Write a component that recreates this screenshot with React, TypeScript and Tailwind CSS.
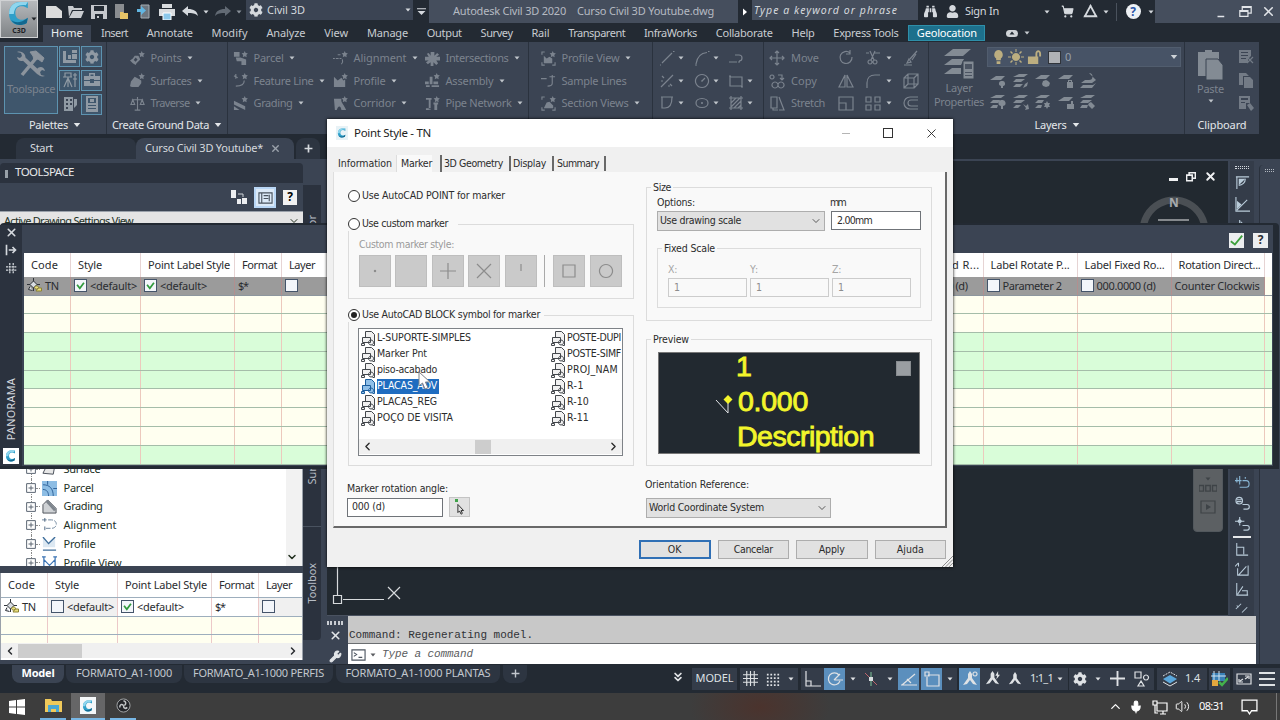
import React, { useLayoutEffect, useRef, useState } from 'react';
import { ChevronDown, ChevronLeft, ChevronRight, ChevronUp, ChevronsDown, Mic, ShoppingCart, Volume2, Wrench, X } from 'lucide-react';
import { FaCog, FaUser, FaBinoculars } from 'react-icons/fa';
import clsx from 'clsx';

interface FitProps {
  w: number;
  children: string;
  className?: string;
}

// Label that spreads or tightens its letters to fill a slot of w pixels
const Fit: React.FC<FitProps> = ({ w, children, className }) => {
  const ref = useRef<HTMLSpanElement>(null);
  const [spacing, setSpacing] = useState(0);

  useLayoutEffect(() => {
    if (ref.current) {
      const natural = ref.current.getBoundingClientRect().width;
      setSpacing((w - natural) / children.length);
    }
  }, [w, children]);

  return (
    <span className={clsx('block shrink-0 whitespace-pre', className)} style={{ width: w }}>
      <span ref={ref} className="inline-block" style={{ letterSpacing: spacing }}>{children}</span>
    </span>
  );
};

interface IconProps {
  d?: string;
  f?: string;
  size?: number;
  className?: string;
}

// d is stroked, f is filled, both on a 16 unit grid
const Icon: React.FC<IconProps> = ({ d, f, size = 16, className }) => (
  <svg width={size} height={size} viewBox="0 0 16 16" fill="none" className={clsx('shrink-0', className)}>
    {f && <path d={f} fill="currentColor" fillRule="evenodd" />}
    {d && <path d={d} stroke="currentColor" strokeWidth="1.2" />}
  </svg>
);

const Caret: React.FC<{ className?: string }> = ({ className }) => (
  <svg width="6" height="4" viewBox="0 0 6 4" className={clsx('shrink-0', className)}>
    <path d="M0.5 0.5h5L3 3.5z" fill="currentColor" />
  </svg>
);

const Cell: React.FC<{ className: string; children?: React.ReactNode }> = ({ className, children }) => (
  <div className={clsx('flex shrink-0 items-center justify-center', className)}>{children}</div>
);

const CLogo: React.FC<{ size: number }> = ({ size }) => (
  <svg width={size} height={size} viewBox="0 0 24 24" className="shrink-0">
    <path d="M20 1v6c-2-1.400-4-2-6-2-4 0-6 2.500-6 6.500 0 4 2.500 6.500 6 6.500 2 0 4-.6 6-2l-1 5c-2 1.300-4.500 2-7 2C6 23 2 19 2 12.500 2 5 6.500 1 13 1z" fill="#2f9fc9" />
    <path d="M2 12.500C2 5 6.500 1 13 1h7l-2 3c-7-1-11 2-11.500 8.500z" fill="#8fd6ee" />
    <path d="M4 18c3 3 9 4 16-2l-1 5c-2 1.300-4.500 2-7 2-3.500 0-6.400-1.800-8-5z" fill="#12688f" />
  </svg>
);

const SPARK = 'M12.500 0l1 2 2.300.5-1.600 1.700.4 2.400-2.100-1.100-2.100 1.100.4-2.400L9.200 2.500l2.300-.5z';

const icons = {
  point: { f: SPARK + 'M9 5l2 4-4 4-1 2-3-2-3-3 3-2 2-3zM6 7l-2 2.500L6 11.500 8 9z' },
  surface: { f: SPARK + 'M1 9l4-5 4 2 3 2v3l-3 4H2L0 14z' },
  traverse: { d: 'M8 1v14M5 15h6M2 4h12M3 4L1 9h4zM13 4l-2 5h4z' },
  parcel: { f: SPARK + 'M1 1h6v5H1zM3 7h5l6 2v6H9v-4H4z' },
  feature: { f: SPARK, d: 'M1 3l4 2M3 1v5M12 8c0 4-3 6-9 6' },
  grading: { f: SPARK + 'M1 5l12 6v4L1 9zM1 11l6 4H1z' },
  alignment: { f: SPARK, d: 'M0 8h2M3 8h3M7 8h2M8 4h-3M10 9c1 3 0 4-1 5' },
  profile: { f: SPARK + 'M1 4l4 4 4-3 2 3 2-1v8H1z' },
  corridor: { f: SPARK + 'M1 3h8c-1 4 2 5 5 12H9C8 9 5 11 4 15H2z' },
  intersection: { f: 'M6 1h4v4l3-3 2 2-3 2h4v4h-4l2 3-2 2-3-3v4H6v-4l-3 2-2-2 3-2H0V6h4L2 3l2-1 2 3z' },
  assembly: { f: SPARK + 'M5 4h3v8H5zM0 9h4v3H0zM9 9h5v3H9zM1 13h4v2H1zM7 13h8v2H7z' },
  pipe: { f: SPARK + 'M1 2h6v2H6v10H4V4H1zM9 7h5v2h-1v6h-3V9H9zM1 13h5v2H1z' },
  profileView: { d: 'M1 4V1h3M1 12v3h3M12 15h3v-3', f: SPARK + 'M3 5l3 3 3-2 3 2v5H3z' },
  sample: { d: 'M0 6h6M9 4h6M12 2v9c0 3-3 3-5 3' },
  sectionView: { d: 'M1 4V1h3M1 12v3h3M12 15h3v-3', f: SPARK + 'M3 13l3-6 3-1 4 4v3z' },
};

type IconName = keyof typeof icons;

const ribbonColumns: { pad: string; items: [IconName, string, number, boolean][] }[] = [
  { pad: 'w-[121px] pl-[23px] border-r', items: [['point', 'Points', 31, true], ['surface', 'Surfaces', 41, true], ['traverse', 'Traverse', 39, true]] },
  { pad: 'w-[100px] pl-[5px]', items: [['parcel', 'Parcel', 30, true], ['feature', 'Feature Line', 60, true], ['grading', 'Grading', 39, true]] },
  { pad: 'w-[92px] pl-[5px]', items: [['alignment', 'Alignment', 53, true], ['profile', 'Profile', 32, true], ['corridor', 'Corridor', 42, true]] },
  { pad: 'w-[109px] pl-[5px] border-r', items: [['intersection', 'Intersections', 63, true], ['assembly', 'Assembly', 48, true], ['pipe', 'Pipe Network', 66, true]] },
  { pad: 'w-[124px] pl-[12px] border-r', items: [['profileView', 'Profile View', 58, true], ['sample', 'Sample Lines', 65, false], ['sectionView', 'Section Views', 67, true]] },
];

const drawTools: [string, boolean][][] = [
  [['M3 13L13 3M1 15h1M14 1.500h1.500', true], ['M2 14C3 7 7 3 13 2.500M1 15h2M14 1.500h1.500', true], ['M1 12h8M7 5h4c4 0 4 6 0 6M10 12h2', false]],
  [['M2 14L14 2M3 3l2 2M11 11l2 2M2 8h2M9 13h2', true], ['M8 1.500a6.500 6.500 0 1 0 .01 0M8 8l3-3M7 8h2', true], ['M2 4h12v9H2zM1 3h2M13 14h2', true]],
  [['M3 2v11h3c5 0 7-4 7-11M2 2h12', true], ['M8 3.500c-8 0-8 9 0 9s8-9 0-9M7 8h2M8 7v2', true], ['M3 1v14M13 1v14M1 3h14M1 13h14M3 8l5-5M3 12l9-9M6 13l7-7M10 13l3-3', true]],
];

const modifyTools: { icon: string; label: string; w: number; a: string; b: string; c: string }[] = [
  {
    icon: 'M8 1v14M1 8h14M6 3l2-2 2 2M6 13l2 2 2-2M3 6L1 8l2 2M13 6l2 2-2 2',
    label: 'Move',
    w: 28,
    a: 'M12 3a6 6 0 1 0 2 4M12 0v4H8',
    b: 'M1 3h3M9 3h6M5 1l4 9M10 1L6 10M5 10a2 2 0 1 0 .01 0M10 10a2 2 0 1 0 .01 0',
    c: 'M14 1L7 9M13 4L9 10M6 9l2 3-4 1zM1 15h8',
  },
  {
    icon: 'M3 2a2 2 0 1 0 .01 0M9 2h4v4M11 5l2 2 2-2M6 9a3 3 0 1 0 .01 0M12 9a3 3 0 1 0 .01 0',
    label: 'Copy',
    w: 26,
    a: 'M7 2v12H1zM9 2v12h6z',
    b: 'M2 15V10C2 5 5 2 10 2h5',
    c: 'M1 5h10v10H1zM1 5l4-4h10v10l-4 4M11 5l4-4M5 1v10h10M5 11l-4 4',
  },
  {
    icon: 'M2 2h6v11H2zM10 2l5 13h-5M4 13v2h5',
    label: 'Stretch',
    w: 34,
    a: 'M1 2h14v13H1zM1 8h7v7',
    b: 'M1 2h5v5H1zM10 2h5v5h-5zM1 10h5v5H1zM10 10h5v5h-5z',
    c: 'M15 2H7a5 5 0 0 0 0 12h8M15 5H8a3 3 0 0 0 0 6h7',
  },
];

const menuTabs: [string, number][] = [
  ['Insert', 27], ['Annotate', 46], ['Modify', 36], ['Analyze', 39], ['View', 24], ['Manage', 41], ['Output', 35], ['Survey', 32],
  ['Rail', 18], ['Transparent', 57], ['InfraWorks', 53], ['Collaborate', 57], ['Help', 23], ['Express Tools', 65],
];

const TitleBar: React.FC = () => (
  <div className="flex h-[23px] items-center text-[#d5d9de]">
    <Cell className="ml-[5px] w-[22px]"><Icon f="M0 2h10l6 5v7H0z" className="text-[#dcdcdc]" /></Cell>
    <Cell className="w-[22px]"><Icon f="M0 2h5l1 2h8v2H4L1 13zM5 7h11l-3 7H1z" className="text-[#c9ccd0]" /></Cell>
    <Cell className="w-[23px]"><Icon f="M0 1h16v14H0zM3 2v5h10V2zM4 10v5h8v-5zM6 12h2v2H6z" className="text-[#c4c7cc]" /></Cell>
    <Cell className="w-[22px]">
      <svg width="16" height="16" viewBox="0 0 16 16"><path d="M2 0h9v14H2z" fill="#8a8d90" /><path d="M7 8h3l1 1h4v6H7z" fill="#e7c467" /></svg>
    </Cell>
    <Cell className="w-[24px]">
      <svg width="16" height="16" viewBox="0 0 16 16"><path d="M5 1h8v13H5z" fill="#6d767f" stroke="#a6adb4" /><path d="M1 5h4V2l5 4.500L5 11V8H1z" fill="#62b6e2" /></svg>
    </Cell>
    <Cell className="w-[21px]">
      <svg width="16" height="16" viewBox="0 0 16 16"><path d="M3 0h10v4H3zM0 5h16v7H0z" fill="#d9dcdf" /><path d="M4 9h8v7H4z" fill="#8cc8ea" stroke="#fff" /></svg>
    </Cell>
    <Cell className="w-[26px]"><Icon f="M0 7l6-5v3c6 0 9 2 10 7-3-3-6-3-10-3v3z" /></Cell>
    <Cell className="w-[6px]"><Caret /></Cell>
    <Cell className="w-[27px] text-[#626a74]"><Icon f="M16 7l-6-5v3c-6 0-9 2-10 7 3-3 6-3 10-3v3z" /></Cell>
    <Cell className="w-[6px] text-[#8a919a]"><Caret /></Cell>
    <div className="ml-1 flex h-[20px] w-[167px] items-center self-start bg-[#3b4453] pl-[3px]">
      <FaCog size={14} />
      <Fit w={38} className="ml-[4px] text-[11px]">Civil 3D</Fit>
      <Caret className="mr-[2px] ml-auto" />
    </div>
    <Cell className="w-[16px]"><Icon size={9} f="M0 2h16v2H0zM1 7h14l-7 7z" /></Cell>
    <div className="flex h-[23px] w-[309px] items-center bg-[#454e5d] pl-[24px] text-[11px] text-[#b5bac2]">
      <Fit w={113}>Autodesk Civil 3D 2020</Fit>
      <Fit w={137} className="ml-[11px]">Curso Civil 3D Youtube.dwg</Fit>
    </div>
    <Cell className="w-[14px]"><Icon size={8} f="M4 1l8 7-8 7z" className="text-white" /></Cell>
    <div className="flex h-[20px] w-[166px] items-center self-start bg-[#454e5d] pt-px pl-[2px] text-[10.500px] italic">
      <Fit w={144}>Type a keyword or phrase</Fit>
    </div>
    <Cell className="w-[24px]"><FaBinoculars size={13} /></Cell>
    <Cell className="w-[20px]"><FaUser size={13} /></Cell>
    <Fit w={34} className="ml-[3px] text-[11px]">Sign In</Fit>
    <Cell className="ml-[44px] w-[8px]"><Caret /></Cell>
    <Cell className="ml-[5px] w-[22px]"><ShoppingCart size={13} fill="currentColor" /></Cell>
    <Cell className="w-[24px]"><Icon d="M8 2L2 13h12zM8 1v3M1 13h3M12 13h3" size={15} className="[&_path]:[stroke-width:2]" /></Cell>
    <Cell className="w-[8px]"><Caret /></Cell>
    <div className="ml-[6px] h-[18px] w-px bg-[#4a525d]" />
    <Cell className="ml-[8px] w-[16px]"><div className="h-[15px] w-[15px] rounded-full bg-[#eef1f5] text-center text-[12px] leading-[15px] font-bold text-[#2a55a8]">?</div></Cell>
    <Cell className="ml-[6px] w-[8px]"><Caret /></Cell>
    <div className="flex h-[23px] flex-1 items-center justify-end bg-[#454e5d] pr-[1px] text-[#e2e5e9]">
      <Cell className="w-[24px]"><Icon size={12} d="M2 14h9" className="[&_path]:[stroke-width:2]" /></Cell>
      <Cell className="w-[23px]"><Icon size={13} d="M1 7h10v7H1zM4 7V2h11v8h-4M1 8h10M4 3h11" className="[&_path]:[stroke-width:1.500]" /></Cell>
      <Cell className="w-[22px]"><X size={15} strokeWidth={2.500} /></Cell>
    </div>
  </div>
);

const MenuRow: React.FC = () => (
  <div className="flex h-[19px] items-center pt-px text-[11px] text-[#c8ccd1]">
    <div className="ml-[5px] flex h-[17px] w-[48px] items-center justify-center self-end bg-[#3b4453] text-[#eceef0]">
      <Fit w={32}>Home</Fit>
    </div>
    <div className="ml-[10px] flex gap-[18.8px]">
      {menuTabs.map(([label, w]) => <Fit key={label} w={w}>{label}</Fit>)}
    </div>
    <div className="ml-[10px] flex h-[16px] w-[77px] items-center justify-center border border-[#2e8fa9] bg-[#1d708c] text-white">
      <Fit w={60}>Geolocation</Fit>
    </div>
    <div className="ml-[21px] flex h-[7px] w-[12px] items-center justify-center rounded-sm bg-[#d0d4d8] text-[#222a33]"><Caret className="rotate-180" /></div>
    <Caret className="ml-[6px]" />
  </div>
);

const SmallTool: React.FC<{ on?: boolean; children: React.ReactNode }> = ({ on, children }) => (
  <div className={clsx('flex h-[21px] w-[21px] items-center justify-center border', on ? 'border-[#5d93b0] bg-[#3f566c]' : 'border-transparent')}>{children}</div>
);

const layerIcons = [
  ['M6 3h9l-4 4H0zM12 8a2.500 2.500 0 0 1 1 5v2h-2v-2a2.500 2.500 0 0 1 1-5', 'M6 1h9l-4 3H0zM3 6h9l-4 3H0zM3 11h7l-3 3H0zM15 9l-1 4-4 2 2-4z', 'M6 2h9l-4 4H0zM11 7l2 1 2 2-1 3-3 1-3-1-1-2 1-3z', 'M6 2h9l-4 4H0zM10 9V7h4v2h1v6H9V9zM11 9h2V8h-2z', 'M9 0a3 3 0 1 1 0 7H5l-4 3h11l4-3zM3 12h10l3-2-4 5H0z'],
  ['M6 1h9l-4 3H0zM3 6h7l-2 3H0zM3 11h5l-1 3H0zM12 6a3 3 0 0 1 1 6v3h-2v-3a3 3 0 0 1 1-6', 'M6 1h9l-4 3H0zM3 6h9l-4 3H0zM3 11h5l-3 3H0zM16 15l-1-5-2 2-3-2 3 4-1 2z', 'M6 1h9l-4 3H0zM3 6h6l-2 3H0zM3 11h4l-1 3H0zM12 7l1 2h2l-1 2 1 2h-2l-1 2-1-2H9l1-2-1-2h2z', 'M6 3h9l-4 4H0zM9 10h4V7h2v3h1v5H9z', 'M6 1h9l-4 3H0zM3 6h9l-4 3H0zM2 11h6l-1 3H0zM9 9l2-1 4 4-3 3-4-4z'],
];

const Ribbon: React.FC = () => (
  <div className="flex h-[92px] w-[1259px] bg-[#3b4453] text-[11px] text-[#7b838e] [&>div]:border-[#2a323e]">
    <div className="flex w-[107px] flex-col border-r">
      <div className="flex h-[74px] pt-[4px] pl-[4px]">
        <div className="flex h-[68px] w-[54px] flex-col items-center border border-[#5d93b0] bg-[#3f566c] pt-[2px]">
          <svg width="30" height="30" viewBox="0 0 30 30" fill="none" stroke="#8c949d">
            <path d="M7 9l16 15" strokeWidth="4" />
            <path d="M1 3l4 1 1 3-2 2-3-1c1 5 6 5 8 2 2-4-3-9-8-7z" fill="#8c949d" strokeWidth="0" />
            <path d="M29 27l-4-1-1-3 2-2 3 1c-1-5-6-5-8-2-2 4 3 9 8 7z" fill="#8c949d" strokeWidth="0" />
            <path d="M21 8L6 26" strokeWidth="3.500" />
            <path d="M14 3l6-1 8 7-2 4-4-3-4 1-1-4z" fill="#8c949d" strokeWidth="1" />
          </svg>
          <Fit w={48} className="mt-[3px] leading-[14px]">Toolspace</Fit>
        </div>
        <div className="ml-px grid grid-cols-[22px_22px] gap-y-[1.500px] text-[#909aa4]">
          <SmallTool on><Icon f="M1 2h3v9h10v3H1zM6 6h3v4H6zM10 1h5v9h-5zM10 4v1h5V4z" /></SmallTool>
          <SmallTool on><FaCog size={14} /></SmallTool>
          <SmallTool on><Icon d="M3 1h6v4H3zM1 5h9M6 5v10M6 6L2 15M6 6l4 9M13 1v14M11 3h4M11 7h4" /></SmallTool>
          <SmallTool on><Icon f="M5 1h6v3h5v4h-6V7H6v1H0V4h5zM6.500 2.500V4h3V2.500zM0 9h6v2h4V9h6v5H0z" /></SmallTool>
          <SmallTool><Icon f="M2 1h9v14H2zM4 3v2h2V3zM8 3v2h2V3zM4 7v2h2V7zM8 7v2h2V7zM4 11v2h2v-2zM12 3h3v6l-3 3z" /></SmallTool>
          <SmallTool on><Icon f="M2 0h12v16H2zM4 2v5h8V2zM4 9v1h8V9zM4 12v1h8v-1zM6 3h4v3H6z" /></SmallTool>
        </div>
      </div>
      <div className="flex items-center justify-center pt-px pl-[3px] text-[11px] text-[#e4e7ea]"><Fit w={39}>Palettes</Fit><Caret className="ml-[6px] scale-130" /></div>
    </div>
    {ribbonColumns.map((col, i) => (
      <div key={i} className={clsx('flex shrink-0 flex-col pt-[5px]', col.pad)}>
        {col.items.map(([icon, label, w, caret]) => (
          <div key={label} className="flex h-[22.500px] items-center">
            <Icon {...icons[icon]} size={15} />
            <Fit w={w} className="ml-[5.500px]">{label}</Fit>
            {caret && <Caret className="ml-[5px] text-[#c0c5cb]" />}
          </div>
        ))}
        {i === 0 && <div className="mt-[2px] -ml-[18px] flex items-center text-[#e4e7ea]"><Fit w={97}>Create Ground Data</Fit><Caret className="ml-[6px] scale-130" /></div>}
      </div>
    ))}
    <div className="w-[111px] border-r pt-[5px] pl-[6px]">
      {drawTools.map((row, i) => (
        <div key={i} className="flex h-[22.500px] items-center">
          {row.map(([d, caret], j) => (
            <div key={j} className="flex w-[36px] items-center">
              <Icon d={d} size={16} />
              {caret && <Caret className="ml-[3px] text-[#c0c5cb]" />}
            </div>
          ))}
        </div>
      ))}
    </div>
    <div className="w-[165px] border-r pt-[5px] pl-[5px]">
      {modifyTools.map((row) => (
        <div key={row.label} className="flex h-[22.500px] items-center">
          <Icon d={row.icon} />
          <Fit w={row.w} className="ml-[6px]">{row.label}</Fit>
          <div className="ml-auto flex w-[93px] items-center">
            <Icon d={row.a} className="ml-[3px]" />
            <Icon d={row.b} className="ml-[11px]" />
            <Caret className="ml-[5px] text-[#c0c5cb]" />
            <Icon d={row.c} className="ml-[11px]" />
          </div>
        </div>
      ))}
    </div>
    <div className="flex w-[256px] flex-col border-r">
      <div className="flex h-[74px]">
        <div className="flex w-[58px] flex-col items-center pt-[6px] pl-[2px]">
          <svg width="32" height="33" viewBox="0 0 32 33" fill="#838b94">
            <path d="M10 1h18l-8 7H1zM9 11h12l-3 6H1zM9 20h9v6H1z" />
            <path d="M20 13h11v18H20z" stroke="#3b4453" />
            <path d="M22 16h7v5h-7zM22 24h7v1h-7zM22 27h7v1h-7z" fill="#4b5462" />
          </svg>
          <Fit w={27} className="leading-[14px]">Layer</Fit>
          <Fit w={50} className="leading-[14px]">Properties</Fit>
        </div>
        <div className="pt-[5px]">
          <div className="flex h-[20px] w-[194px] items-center border border-[#515d6e] bg-[#475366] pr-[3px] pl-[3px]">
            <Icon f="M8 0a5 5 0 0 1 2.500 9v2h-5V9A5 5 0 0 1 8 0zM6 12h4v3H6z" size={15} className="text-[#bcae80]" />
            <Icon f="M8 4a4 4 0 1 1-.01 0M7.500 0h1v3h-1zM7.500 13h1v3h-1zM0 7.500h3v1H0zM13 7.500h3v1h-3zM2 3l1-1 2 2-1 1zM13 2l1 1-2 2-1-1zM2 13l2-2 1 1-2 2zM11 12l1-1 2 2-1 1z" className="ml-[2px] text-[#bcae80]" />
            <Icon f="M1 7h8V4c0-5 6-5 6 0v3h-2V4c0-2-2-2-2 0v3h1v8H1z" size={15} className="ml-[3px] text-[#bcae80]" />
            <div className="ml-[6px] h-[13px] w-[13px] border border-[#30343a] bg-[#b0b2b6]" />
            <span className="ml-[4px] text-[#98a0aa]">0</span>
            <Caret className="ml-auto scale-130 text-[#cdd2d7]" />
          </div>
          {layerIcons.map((row, i) => (
            <div key={i} className="flex h-[21.500px] items-end gap-[6.500px] pl-[3px] text-[#838b94]">
              {row.map((f) => <Icon key={f} f={f} />)}
            </div>
          ))}
        </div>
      </div>
      <div className="flex items-center justify-center pt-px text-[#e4e7ea]"><Fit w={32}>Layers</Fit><Caret className="ml-[6px] scale-130" /></div>
    </div>
    <div className="flex flex-1 flex-col">
      <div className="flex h-[74px] pt-[7px] pl-[10px]">
        <div className="flex w-[31px] flex-col items-center">
          <svg width="27" height="33" viewBox="0 0 27 33" fill="#838b94"><path d="M1 3h7V1h7v2h7v24H1z" /><path d="M9 10h12l5 6v15H9z" stroke="#3b4453" /></svg>
          <Fit w={27} className="leading-[14px]">Paste</Fit>
          <Caret className="mt-[3px] text-[#c0c5cb]" />
        </div>
        <div className="ml-[12px] flex flex-col gap-[7px] text-[#737b86]">
          <Icon f="M1 1h12v6l-3 3v4H1zM3 3v1h7V3zM3 6v1h7V6zM3 9v1h5V9z" d="M9 8l6 6M15 8l-6 6" />
          <Icon f="M1 1h7l3 3H5v9H1zM6 5h6l3 3v8H6z" />
          <Icon f="M1 1h11v7H8v6H1zM3 3v2h7V3zM3 7v1h4V7zM9 10l3-2 4 5-3 3z" />
        </div>
      </div>
      <div className="flex justify-center pt-px text-[#e4e7ea]"><Fit w={49}>Clipboard</Fit></div>
    </div>
  </div>
);

const FileTabs: React.FC = () => (
  <div className="flex h-[27px] shrink-0 items-end border-b-2 border-[#3b4453] pl-[16px] text-[11px] text-[#d5d9de]">
    <div className="flex h-[21px] w-[120px] items-center rounded-t-lg bg-[#2d3541] pl-[14px]"><Fit w={23}>Start</Fit></div>
    <div className="flex h-[21px] w-[158px] items-center rounded-t-lg bg-[#3b4453] pl-[9px]">
      <Fit w={118}>Curso Civil 3D Youtube*</Fit>
      <X size={11} strokeWidth={3} className="ml-[7px] text-[#9ba2ab]" />
    </div>
    <Cell className="ml-[2px] h-[21px] w-[24px] rounded-t-lg bg-[#2d3541]"><Icon size={9} d="M8 1v14M1 8h14" className="[&_path]:[stroke-width:3]" /></Cell>
  </div>
);

const Check: React.FC<{ on?: boolean }> = ({ on }) => (
  <div className="flex h-[13px] w-[13px] shrink-0 items-center justify-center border border-[#44546a] bg-[#f3f6fa]">
    {on && <Icon size={11} d="M3 7l4 5 6-8" className="text-[#2f9a3b] [&_path]:[stroke-width:2.500]" />}
  </div>
);

interface Column {
  w: string;
  head?: string;
  headW?: number;
  cell?: React.ReactNode;
}

const pointIcon = (
  <svg width="15" height="15" viewBox="0 0 15 15" fill="none" className="shrink-0" stroke="#30343a">
    <path d="M6.500 0v13M0 6.500h13" />
    <path d="M6.500 3L10 6.500 6.500 10 3 6.500zM3 8.500l-1.500 3 4 1" fill="#d9dde2" />
    <path d="M8 10.500a2 1.600 0 1 1 .01.01M11 10h3.500v3H9z" fill="#e9df7d" stroke="#8d8335" />
  </svg>
);

const baseColumns: Column[] = [
  { w: 'w-[47px]', head: 'Code', headW: 27, cell: <>{pointIcon}<Fit w={14} className="ml-[3px]">TN</Fit></> },
  { w: 'w-[70px]', head: 'Style', headW: 24, cell: <><Check on /><Fit w={47} className="ml-[3px]">{'<default>'}</Fit></> },
  { w: 'w-[94px]', head: 'Point Label Style', headW: 82, cell: <><Check on /><Fit w={47} className="ml-[3px]">{'<default>'}</Fit></> },
  { w: 'w-[47px]', head: 'Format', headW: 35, cell: <Fit w={10}>$*</Fit> },
  { w: 'w-[47px]', head: 'Layer', headW: 26, cell: <Check /> },
];

const panoramaColumns: Column[] = [
  ...baseColumns,
  ...Array.from({ length: 6 }, () => ({ w: 'w-[93.600px]' })),
  { w: 'w-[93px]', head: 'Label Fixed R...', headW: 82, cell: <><Check /><Fit w={58} className="ml-[3px]">000.0000 (d)</Fit></> },
  { w: 'w-[94px]', head: 'Label Rotate P...', headW: 79, cell: <><Check /><Fit w={59} className="ml-[3px]">Parameter 2</Fit></> },
  { w: 'w-[94px]', head: 'Label Fixed Ro...', headW: 80, cell: <><Check /><Fit w={59} className="ml-[3px]">000.0000 (d)</Fit></> },
  { w: 'w-[93px]', head: 'Rotation Direct...', headW: 82, cell: <Fit w={85}>Counter Clockwis</Fit> },
];

const stripes = ['bg-[#fffff0]', 'bg-[#fffff0]', 'bg-[#d9fdd9]', 'bg-[#d9fdd9]', 'bg-[#d9fdd9]', 'bg-[#fffff0]', 'bg-[#fffff0]', 'bg-[#fffff0]', 'bg-[#d9fdd9]'];

const TableHead: React.FC<{ columns: Column[] }> = ({ columns }) => (
  <div className="flex h-[24px] shrink-0 bg-white">
    {columns.map((c, i) => (
      <div key={i} className={clsx('flex shrink-0 items-center border-r border-[#e6d4d4] pl-[7px]', c.w)}>
        {c.head && <Fit w={c.headW ?? 0}>{c.head}</Fit>}
      </div>
    ))}
  </div>
);

const Panorama: React.FC = () => (
  <section className="absolute top-[223px] left-0 z-10 flex h-[246px] w-[1279px] rounded-t border-t-2 border-r-[6px] border-b-[3px] border-[#232a33] bg-[#3b4453] text-[11px] text-[#2a2c30]">
    <div className="flex w-[22px] shrink-0 flex-col items-center bg-[#2b323e] text-[#d5d9de]">
      <X size={13} strokeWidth={3} className="mt-px" />
      <Icon size={12} d="M2 1v14M5 8h9M10 4l4 4-4 4" className="mt-[5px] [&_path]:[stroke-width:2.200]" />
      <Icon size={11} d="M5.500 0v16M10.500 0v16M0 5.500h16M0 10.500h16" className="mt-[7px] rotate-0 [&_path]:[stroke-dasharray:3_1] [&_path]:[stroke-width:1.800]" />
      <div className="mt-auto mb-[8px] rotate-180 text-[10.800px] tracking-[0.3px] [writing-mode:vertical-rl]">PANORAMA</div>
      <div className="mb-[2px] flex h-[16px] w-[16px] items-center justify-center bg-white"><CLogo size={12} /></div>
    </div>
    <div className="ml-[2px] flex flex-1 flex-col">
      <div className="flex h-[28px] items-center justify-end gap-[9px] pt-[2px] pr-[5px]">
        <Cell className="h-[15px] w-[15px] bg-[#eceef0]"><Icon size={13} d="M1 9l5 4 9-11" className="text-[#3da03c] [&_path]:[stroke-width:2.200]" /></Cell>
        <Cell className="h-[15px] w-[15px] bg-[#eceef0] text-[12px] font-bold">?</Cell>
      </div>
      <div className="w-[1248px] overflow-hidden bg-white">
        <TableHead columns={panoramaColumns} />
        <div className="flex h-[18.500px] border-b border-[#8d969e] bg-[#9b9b9b]">
          {panoramaColumns.map((c, i) => (
            <div key={i} className={clsx('flex shrink-0 items-center border-r border-[#b28f8f] pl-[3px]', c.w)}>{c.cell}</div>
          ))}
          <div className="flex-1 bg-[#fffff0]" />
        </div>
        {stripes.map((bg, r) => (
          <div key={r} className={clsx('flex h-[18.800px] border-b border-[#a5bda9]', bg)}>
            {panoramaColumns.map((c, i) => <div key={i} className={clsx('shrink-0 border-r border-[#ecc9bd]', c.w)} />)}
          </div>
        ))}
      </div>
    </div>
  </section>
);

const treeItems: { label: string; w: number; art: React.ReactNode }[] = [
  { label: 'Surface', w: 37, art: <path d="M1 12L5 4l9-2-2 11z" fill="#e7e7e7" stroke="#444b55" /> },
  { label: 'Parcel', w: 30, art: <><path d="M0 0h16v16H0z" fill="#8dbde4" /><path d="M1 4c7 0 11 4 11 12M1 9c4 0 6 3 6 7M6 0v4M12 8h4" stroke="#2c5f96" /></> },
  { label: 'Grading', w: 39, art: <><path d="M1 6l5-5 9 9v5H1z" fill="#cfd2d5" stroke="#4a4f56" /><path d="M5 2l9 10" stroke="#7e858d" strokeWidth="3" /></> },
  { label: 'Alignment', w: 53, art: <><path d="M0 2h10c7 0 7 9 0 9H3" stroke="#6a8199" strokeDasharray="5 1.500" /><path d="M3 0v4M3 9v4" stroke="#47617c" /></> },
  { label: 'Profile', w: 32, art: <><path d="M1 0l6 6 7-6v11H1z" fill="#dce8f2" /><path d="M1 0l6 7 7-7M1 14h14" stroke="#3f6e9b" strokeWidth="1.400" /></> },
  { label: 'Profile View', w: 58, art: <path d="M2 2v12M14 2v12M2 5l6 6 6-6M0 2h4M12 2h4" stroke="#3a73b4" strokeWidth="1.300" /> },
];

const Toolspace: React.FC = () => (
  <aside className="flex w-[303px] shrink-0 flex-col text-[11px] text-[#22301f]">
    <div className="mt-[2px] flex h-[20px] items-center rounded-t bg-[#2b323e] pb-[2px] pl-[5px] text-[11.500px] text-[#e6e8ea]">
      <div className="mt-1 h-[8px] w-[3px] bg-[#98a0a8]" />
      <Fit w={59} className="ml-[7px]">TOOLSPACE</Fit>
    </div>
    <div className="flex h-[28px] items-center justify-end pr-[6px]">
      <svg width="16" height="16" viewBox="0 0 16 16" fill="#eceef0"><path d="M0 1h5v8H0zM6 10h4v5H6zM11 9h5v6h-5z" /><path d="M7 5h5v3" stroke="#cfd3d8" fill="none" /></svg>
      <div className="ml-[7px] flex h-[21px] w-[22px] items-center justify-center border-2 border-[#b8d6f5] bg-[#dbe9f7]">
        <Icon size={15} d="M1 3h14v11H1zM4 3v11M6 6h5M6 9h5M12 5v7" className="text-[#49535e]" />
      </div>
      <Cell className="ml-[7px] h-[15px] w-[14px] bg-[#f2f2f2] text-[12px] font-bold text-black">?</Cell>
    </div>
    <div className="flex h-[19px] shrink-0 items-center border-t border-[#9aa1aa] bg-[#e4e4e4] pr-[3px] pl-[4px]">
      <Fit w={129} className="text-[11px]">Active Drawing Settings View</Fit>
      <ChevronDown size={12} className="ml-auto" />
    </div>
    <div className="flex h-[336px] shrink-0 overflow-hidden border-r border-[#9aa1aa] bg-white pt-[230px]">
      <div className="flex-1 pl-[26px]">
        {treeItems.map((item) => (
          <div key={item.label} className="relative flex h-[18.700px] items-center before:absolute before:top-0 before:left-[5px] before:h-full before:border-l before:border-dotted before:border-[#8a8a8a]">
            <Icon size={10} d="M1 1h14v14H1zM4 8h8M8 4v8" className="relative bg-white text-[#5c6673] [&_path]:[stroke-width:1.600]" />
            <div className="w-[4px] border-t border-dotted border-[#8a8a8a]" />
            <svg width="15" height="15" viewBox="0 0 16 16" fill="none" className="ml-[2px]">{item.art}</svg>
            <Fit w={item.w} className="ml-[6.500px]">{item.label}</Fit>
          </div>
        ))}
      </div>
      <div className="flex w-[16px] items-end bg-[#f2f2f2] pb-[3px]"><ChevronDown size={12} strokeWidth={3} /></div>
    </div>
    <div className="mt-[7px] flex h-[87px] shrink-0 flex-col overflow-hidden border-r border-l border-[#9aa1aa] bg-white text-[#2a2c30]">
      <TableHead columns={baseColumns} />
      <div className="flex h-[19.500px] shrink-0 border-y border-[#9daebd]">
        {baseColumns.map((c, i) => (
          <div key={i} className={clsx('flex shrink-0 items-center border-r border-[#ecc9c9] pl-[3px]', c.w, (i === 1 || i === 4) && 'bg-[#f0f0f0]')}>
            {i === 1 ? <><Check /><Fit w={47} className="ml-[3px]">{'<default>'}</Fit></> : c.cell}
          </div>
        ))}
      </div>
      <div className="flex h-[18.500px] shrink-0 border-b border-[#9daebd] bg-[#fffff0]">
        {baseColumns.map((c, i) => <div key={i} className={clsx('shrink-0 border-r border-[#ecc9c9]', c.w)} />)}
      </div>
      <div className="flex h-[8px] shrink-0 bg-[#fffff0]">
        {baseColumns.map((c, i) => <div key={i} className={clsx('shrink-0 border-r border-[#ecc9c9]', c.w)} />)}
      </div>
      <div className="flex h-[15px] items-center bg-[#f0f0f0] px-[3px]">
        <ChevronLeft size={12} strokeWidth={3} />
        <div className="ml-[2px] h-[14px] w-[64px] bg-[#cdcdcd]" />
        <ChevronRight size={12} strokeWidth={3} className="ml-auto" />
      </div>
    </div>
  </aside>
);

const SideTabs: React.FC = () => (
  <div className="flex w-[24px] shrink-0 flex-col bg-[#3b4453] pt-[24px] text-[11px] text-[#b7bdc5]">
    <div className="flex h-[230px] w-[18px] shrink-0 justify-center bg-[#2b323e] pt-[30px]"><span className="rotate-180 self-start [writing-mode:vertical-rl]">Prospector</span></div>
    <div className="flex h-[112px] w-[18px] shrink-0 justify-center border-b border-[#49525f] bg-[#2b323e]"><span className="mt-[35px] rotate-180 self-start [writing-mode:vertical-rl]">Survey</span></div>
    <div className="flex h-[113px] w-[18px] shrink-0 items-center justify-center rounded-br bg-[#2b323e]"><span className="rotate-180 [writing-mode:vertical-rl]">Toolbox</span></div>
  </div>
);

const sideTools = [
  'M0 6h7M5 1v9M2 3v5M8 6h4c4 0 4 7 0 7H5M11 2v2', 'M1 5a3.500 3.500 0 1 1 7 0 3.500 3.500 0 1 1-7 0M2 4h5M2 6h5M8 9h5c3 0 3 5 0 5H9', 'M5 0v9M0 4.500h10M5 2.500l2 2-2 2-2-2zM8 9h5c3 0 3 5 0 5H9',
];

const cornerTools = ['M2 1v14h13M2 6h8v8', 'M3 7v8h12V4M4 15l9-10M0 5l4-4M4 1v4', 'M2 1v14h13M3 14L9 5M8 10h6v5', 'M1 8l6-6M8 12l6-6M2 4l2 2'];

const Drawing: React.FC = () => (
  <div className="flex h-[455px] shrink-0">
    <div className="relative w-[901px] overflow-hidden border-b border-[#4a5260] bg-[#222930]">
      <div className="absolute top-[9px] right-[11px] flex items-center gap-[8px] text-[#f0f1f2]">
        <div className="mt-[5px] h-[3px] w-[9px] bg-current" />
        <Icon size={10} d="M1 5h9v9H1zM5 5V1h10v9h-4" className="[&_path]:[stroke-width:2.500]" />
        <X size={13} strokeWidth={3.500} />
      </div>
      <svg width="72" height="72" viewBox="0 0 72 72" className="absolute top-[33px] left-[811px]" fill="none">
        <path d="M36 6a31 31 0 1 1-.01 0" stroke="#4a4f54" strokeWidth="7" />
        <path d="M20 26h31" stroke="#a7aaad" strokeWidth="1.500" />
      </svg>
      <span className="absolute top-[33px] left-[842px] text-[12px] font-bold text-[#a7aaad]">N</span>
      <div className="absolute top-[300px] left-[866px] flex h-[71px] w-[30px] flex-col items-center justify-end gap-[4px] rounded border border-[#52585d] bg-[#5c6063] pb-[16px] text-[#3e4347]">
        <Caret />
        <Icon d="M0 4h4v5H0zM6 4h4v5H6zM12 4h4v5h-4z" size={18} className="-my-[4px]" />
        <Icon d="M1 2h14v12H1z" f="M6 5l5 3-5 3z" size={16} />
      </div>
      <svg width="76" height="46" viewBox="0 0 76 46" fill="none" stroke="#d7dadc" className="absolute top-[405px] left-[4px]">
        <path d="M6.500 0v30M12 33.500h41M2.500 29.500h8v8h-8zM57 21l12 12M69 21L57 33" strokeWidth="1.200" />
      </svg>
    </div>
    <div className="ml-[2px] flex w-[24px] flex-col items-center bg-[#343c49] text-[#b9cbd9]">
      <div className="mt-[5px] h-[3px] w-[14px] border-y border-dotted border-[#d3d8de]" />
      <Icon size={15} d="M1 2h14M2 2v13M4 11c4 0 7-3 7-7" f="M4 4h7l-7 7z" className="mt-[6px]" />
      <Icon size={15} d="M1 0v15h15M2 14L13 3" f="M2 4l5 4-5 5z" className="mt-[7px]" />
      <Icon size={15} d="M5 1v8h8" f="M6 2l5 5H6z" className="mt-[7px]" />
      <div className="mt-auto flex flex-col items-center gap-[6px]">
        {sideTools.map((d) => <Icon key={d} size={15} d={d} className="first:text-[#88b5d3]" />)}
        <div className="-my-[2px] h-[2px] w-[18px] shrink-0 bg-[#e5e7e9]" />
        {cornerTools.map((d) => <Icon key={d} size={14} d={d} />)}
      </div>
    </div>
  </div>
);

const CommandLine: React.FC = () => (
  <div className="flex h-[49px] shrink-0 font-['Liberation_Mono',monospace] text-[11px]">
    <div className="flex w-[21px] flex-col items-center bg-[#3b4453] pr-[5px] text-[#e2e5e8]">
      <div className="mt-[5px] h-[4px] w-[16px] border-y-2 border-dotted border-[#c9cdd3]" />
      <X size={13} strokeWidth={3} className="mt-[4px]" />
      <Wrench size={13} fill="currentColor" className="mt-[8px]" />
    </div>
    <div className="w-[908px]">
      <div className="flex h-[28px] items-end border-b border-[#6a6d70] bg-[#c8c8c8] text-[#303236]"><Fit w={184} className="pl-px">Command: Regenerating model.</Fit></div>
      <div className="flex h-[21px] items-center bg-white pl-[3px] text-[#5a5c60] italic">
        <Icon size={15} d="M1 3h14v11H1zM3 6l3 2-3 2M8 11h4" className="text-[#4d5560]" />
        <Caret className="ml-[4px]" />
        <Fit w={91} className="ml-[6px]">Type a command</Fit>
      </div>
    </div>
  </div>
);

const StatusBox: React.FC<{ className: string; children: React.ReactNode }> = ({ className, children }) => (
  <div className={clsx('flex h-[22px] shrink-0 items-center bg-[#343c49]', className)}>{children}</div>
);

const MAN = 'M8 0l2 3v4l5 7-4-1-3-4-3 4-4 1 5-7V3z';

const StatusBar: React.FC = () => (
  <div className="flex h-[29px] shrink-0 items-center bg-[#232a33] text-[11px] text-[#dfe2e5]">
    <div className="flex h-[19px] w-[665px] items-center self-start text-[#c2c7cd]">
      <Cell className="ml-[12px] h-[18px] w-[52px] rounded-b-lg bg-[#3b4453] text-white"><Fit w={33} className="font-bold">Model</Fit></Cell>
      <Cell className="ml-[2px] h-[18px] w-[116px] rounded-b-lg bg-[#2d3541]"><Fit w={96}>FORMATO_A1-1000</Fit></Cell>
      <Cell className="ml-[2px] h-[18px] w-[149px] rounded-b-lg bg-[#2d3541]"><Fit w={131}>FORMATO_A1-1000 PERFIS</Fit></Cell>
      <Cell className="ml-[3px] h-[18px] w-[164px] rounded-b-lg bg-[#2d3541]"><Fit w={145}>FORMATO_A1-1000 PLANTAS</Fit></Cell>
      <Cell className="ml-[3px] h-[18px] w-[24px] rounded-b-lg bg-[#2d3541]"><Icon size={9} d="M8 1v14M1 8h14" className="[&_path]:[stroke-width:2.500]" /></Cell>
    </div>
    <Cell className="mb-[4px] w-[25px]"><ChevronsDown size={14} strokeWidth={3} /></Cell>
    <StatusBox className="ml-[2px] w-[45px] justify-center"><Fit w={38}>MODEL</Fit></StatusBox>
    <StatusBox className="ml-[3px] w-[58px]">
      <Cell className="w-[21px]"><Icon size={15} d="M4 0v16M8 0v16M12 0v16M0 4h16M0 8h16M0 12h16" /></Cell>
      <Cell className="w-[24px]"><Icon size={14} f="M1 2h2v2H1zM5 2h2v2H5zM9 2h2v2H9zM13 2h2v2h-2zM1 6h2v2H1zM5 6h2v2H5zM9 6h2v2H9zM13 6h2v2h-2zM1 10h2v2H1zM5 10h2v2H5zM9 10h2v2H9zM13 10h2v2h-2zM1 14h2v2H1zM5 14h2v2H5zM9 14h2v2H9zM13 14h2v2h-2z" /></Cell>
      <Cell className="w-[12px]"><Caret /></Cell>
    </StatusBox>
    <StatusBox className="ml-[3px] w-[156px]">
      <Cell className="w-[23px]"><Icon size={16} d="M1 0v15h15M1 10h5v5" /></Cell>
      <Cell className="h-[22px] w-[21px] bg-[#5b8fbd]"><Icon size={16} d="M12 4a6 6 0 1 0 1 6M7 9l6-6M7 9h9" /></Cell>
      <Cell className="w-[16px]"><Caret /></Cell>
      <Cell className="w-[20px]">
        <svg width="14" height="16" viewBox="0 0 14 16"><path d="M1 2l12 12" stroke="#c0656c" /><path d="M7 1v14" stroke="#7fc59a" /><path d="M5 6h4v4H5z" fill="#d9dde0" /></svg>
      </Cell>
      <Cell className="w-[17px]"><Caret /></Cell>
      <Cell className="h-[22px] w-[21px] bg-[#5b8fbd]"><Icon size={16} d="M0 14h16M1 14L14 3M6 8l4 4" /></Cell>
      <Cell className="ml-[2px] h-[22px] w-[21px] bg-[#5b8fbd]"><Icon size={16} d="M4 4h11v11H3V6M1 1h4v4H1z" /></Cell>
      <Cell className="w-[15px]"><Caret /></Cell>
    </StatusBox>
    <StatusBox className="ml-[2px] w-[109px]">
      <Cell className="h-[22px] w-[21px] bg-[#5b8fbd]"><Icon f={MAN} d="M13 1a2 2 0 1 0 .01 0" /></Cell>
      <Cell className="w-[24px]"><Icon size={15} f={MAN + 'M14 0l-3 5h2l-1 4 4-5h-2z'} /></Cell>
      <Cell className="w-[21px]"><Icon size={14} f={MAN} /></Cell>
      <Fit w={23} className="ml-[5px]">1:1_1</Fit>
      <Caret className="ml-[4px]" />
    </StatusBox>
    <StatusBox className="ml-px w-[85px]">
      <Cell className="w-[21px]"><FaCog size={14} /></Cell>
      <Cell className="w-[16px]"><Caret /></Cell>
      <Cell className="w-[23px]"><Icon size={15} d="M8 0v16M0 8h16" className="[&_path]:[stroke-width:2]" /></Cell>
      <Cell className="w-[25px]"><Icon size={16} d="M1 1h6v6H1zM12 4a2.500 2.500 0 1 0 .01 0M7 10l-3 5h6z" /></Cell>
    </StatusBox>
    <StatusBox className="ml-[3px] w-[50px]">
      <Cell className="w-[25px]">
        <svg width="16" height="16" viewBox="0 0 16 16"><path d="M1 11l7 4 7-4" stroke="#dfe2e5" fill="none" /><path d="M8 4l7 4-7 4.500L1 8z" fill="#5aa7dc" /><path d="M1 5l7-4 7 4" stroke="#dfe2e5" strokeDasharray="2 1" fill="none" /></svg>
      </Cell>
      <Fit w={15} className="ml-[3px]">1.4</Fit>
    </StatusBox>
    <StatusBox className="ml-[2px] w-[21px] justify-center">
      <svg width="17" height="16" viewBox="0 0 17 16"><path d="M1 2h13v8H1z" fill="#397fb5" /><path d="M3 0v13M8 0v10M0 5h15" stroke="#cfe4f2" /><path d="M1 9h6v6H1z" fill="#e3a73f" /><path d="M8 11l3 3 6-7" stroke="#44b14c" strokeWidth="2.500" fill="none" /></svg>
    </StatusBox>
    <StatusBox className="ml-[3px] flex-1">
      <Cell className="w-[22px]"><Icon size={16} d="M1 3h14v10H1zM9 5h4v3M3 8v3h4M12 6l-3 2M4 10l3-2" /></Cell>
      <Cell className="w-[23px]"><Icon size={16} d="M0 2h16M0 8h16M0 14h16" className="[&_path]:[stroke-width:1.800]" /></Cell>
    </StatusBox>
  </div>
);

const Taskbar: React.FC = () => (
  <div className="flex h-[27px] shrink-0 items-center bg-[#3d3d3d] bg-[radial-gradient(ellipse_70px_40px_at_760px_14px,#4b332d,#3d3d3d)] text-[11px] text-white">
    <Cell className="ml-[4px] w-[25px]"><Icon f="M0 2l7-1v6.500H0zM8 1l8-1v7.500H8zM0 8.500h7V15l-7-1zM8 8.500h8V16l-8-1z" /></Cell>
    <Cell className="ml-[11px] h-full w-[26px] border-b-2 border-[#6fb0df]">
      <svg width="17" height="15" viewBox="0 0 17 15"><path d="M0 1h6l1 2h10v11H0z" fill="#f0c95a" /><path d="M3 7h11v7h-3v-3H6v3H3z" fill="#4aa7d4" /></svg>
    </Cell>
    <Cell className="ml-[5px] h-full w-[34px] border-b-2 border-[#78b7e5] bg-[#666667]"><div className="flex h-[17px] w-[16px] items-center justify-center bg-[#f4f7f9]"><CLogo size={12} /></div></Cell>
    <Cell className="ml-[5px] h-full w-[26px] border-b-2 border-[#78b7e5]">
      <svg width="15" height="15" viewBox="0 0 16 16" fill="none"><circle cx="8" cy="8" r="7" fill="#24262a" stroke="#a9abad" /><path d="M8 3c3 1 3 3 1 5M12 10c-2 2-4 1-4-2M4 10c0-3 2-4 4-2" stroke="#c3c5c7" strokeWidth="1.600" /></svg>
    </Cell>
    <Cell className="ml-auto w-[20px]"><ChevronUp size={15} /></Cell>
    <Cell className="w-[22px]"><Mic size={14} fill="currentColor" /></Cell>
    <Cell className="w-[25px]"><Icon d="M5 4h10v8H5zM8 15h6M11 12v3M1 2h4v4H1zM3 6v8h3" /></Cell>
    <Cell className="w-[20px]"><Volume2 size={15} strokeWidth={1.500} /></Cell>
    <Fit w={25} className="ml-[7px]">08:31</Fit>
    <Cell className="ml-[16px] w-[18px]"><Icon size={17} d="M1 2h14v10h-5l-2 3-2-3H1z" /></Cell>
    <div className="mr-[3px] ml-[18px] h-full w-px bg-[#777]" />
  </div>
);

const Radio: React.FC<{ label: string; w: number; on?: boolean }> = ({ label, w, on }) => (
  <div className="flex h-[14px] items-center">
    <div className="flex h-[12px] w-[12px] items-center justify-center rounded-full border border-[#333] bg-white">{on && <div className="h-[6px] w-[6px] rounded-full bg-[#222]" />}</div>
    <Fit w={w} className="ml-[2px]">{label}</Fit>
  </div>
);

const markerShapes = ['M7.500 7.500h1v1h-1z', '', 'M8 0v16M0 8h16', 'M1 1l14 14M15 1L1 15', 'M8 1v7'];

const blocks: [string, number][][] = [
  [['L-SUPORTE-SIMPLES', 94], ['Marker Pnt', 50], ['piso-acabado', 60], ['PLACAS_ADV', 60], ['PLACAS_REG', 60], ['POÇO DE VISITA', 76]],
  [['POSTE-DUPI', 54], ['POSTE-SIMF', 54], ['PROJ_NAM', 51], ['R-1', 17], ['R-10', 22], ['R-11', 22]],
];

const MarkerButton: React.FC<{ d: string; className?: string }> = ({ d, className }) => (
  <div className={clsx('flex h-[32px] w-[32px] shrink-0 items-center justify-center border border-[#bebebe] bg-[#cacaca] text-[#8c8c8c]', className)}>
    <Icon size={16} d={d} />
  </div>
);

const BlockList: React.FC = () => (
  <div className="relative mt-[6px] ml-[9px] flex h-[128px] w-[265px] flex-col justify-between border border-[#7e8287] bg-white">
    <div className="flex overflow-hidden pt-[1px] pl-[2px]">
      {blocks.map((col, i) => (
        <div key={i} className="w-[190px] shrink-0">
          {col.map(([label, w]) => {
            const selected = label === 'PLACAS_ADV';
            return (
              <div key={label} className="flex h-[16px] items-center">
                <svg width="15" height="15" viewBox="0 0 15 15" fill={selected ? '#8fbfe8' : '#f1f1f1'} stroke={selected ? '#1a5c9c' : '#43474c'}>
                  <path d="M4.500 6V.5h6l3 3v11h-2" />
                  <path d="M1.500 6.500h8v5h-8zM.5 12.500h3v2h-3zM10 9a2.500 2.500 0 1 0 .01 0" />
                </svg>
                <span className={clsx('ml-px flex h-[15px] items-center', selected && 'bg-[#1f6cc0] pr-[2px] text-white')}><Fit w={w}>{label}</Fit></span>
              </div>
            );
          })}
        </div>
      ))}
    </div>
    <div className="mb-px flex h-[15px] items-center bg-[#f0f0f0] px-[2px] text-[#2a2a2a]">
      <ChevronLeft size={13} strokeWidth={2.500} />
      <div className="ml-[101px] h-[14px] w-[16px] bg-[#cdcdcd]" />
      <ChevronRight size={13} strokeWidth={2.500} className="ml-auto" />
    </div>
    <svg width="13" height="19" viewBox="0 0 13 19" className="absolute top-[42px] left-[59px]"><path d="M1 1v14l3.500-3 2.500 6 3-1.300-2.600-5.700H12z" fill="#fff" stroke="#7b8087" /></svg>
  </div>
);

const dialogButtons: [string, number][] = [['OK', 14], ['Cancelar', 39], ['Apply', 26], ['Ajuda', 27]];

const PointStyleDialog: React.FC = () => (
  <section className="absolute top-[119px] left-[327px] z-20 flex h-[448px] w-[626px] flex-col bg-[#f0f0f0] font-['DejaVu_Sans_Condensed','DejaVu_Sans',sans-serif] text-[10.500px] text-[#2c2c2c] shadow-[0_0_3px_#000]">
    <div className="flex h-[28px] shrink-0 items-center bg-white pl-[9px] text-[#222]">
      <div className="flex h-[14px] w-[12px] items-center justify-center bg-[#e8f2f6]"><CLogo size={10} /></div>
      <Fit w={77} className="ml-[6px] font-['Noto_Sans',sans-serif] text-[11.500px]">Point Style - TN</Fit>
      <div className="ml-auto h-px w-[8px] bg-[#b5b5b5]" />
      <div className="ml-[33px] h-[10px] w-[10px] border border-[#333]" />
      <X size={15} strokeWidth={1.400} className="mr-[14px] ml-[31px]" />
    </div>
    <div className="mt-[8px] ml-[9px] flex h-[17px] shrink-0 items-center">
      <Fit w={54} className="ml-[2px]">Information</Fit>
      <div className="ml-[4px] flex h-[18px] items-center border-l border-[#ddd] bg-[#f9f9f9] pl-[4px]"><Fit w={31}>Marker</Fit></div>
      <div className="ml-[8px] flex h-[17px] items-center border-l-2 border-[#696969] pl-[2px]"><Fit w={59}>3D Geometry</Fit></div>
      <div className="ml-[6px] flex h-[15px] items-center border-l-2 border-[#696969] pl-[2px]"><Fit w={33}>Display</Fit></div>
      <div className="ml-[6px] flex h-[15px] items-center border-l-2 border-[#696969] pl-[3px]"><Fit w={42}>Summary</Fit></div>
      <div className="ml-[5px] h-[15px] w-[2px] bg-[#696969]" />
    </div>
    <div className="ml-[6px] flex h-[356px] w-[614px] shrink-0 border-r-2 border-b-2 border-l border-[#696969] border-l-[#dedede] bg-[#f9f9f9]">
      <div className="w-[300px] pt-[17px] pl-[14px]">
        <Radio label="Use AutoCAD POINT for marker" w={143} />
        <fieldset className="mt-[14px] h-[82px] w-[286px] border border-[#dcdcdc]">
          <legend className="-ml-px pr-[10px]"><Radio label="Use custom marker" w={86} /></legend>
          <Fit w={95} className="mt-[5px] ml-[10px] h-[16px] leading-[16px] text-[#9b9b9b]">Custom marker style:</Fit>
          <div className="mt-[3px] ml-[10px] flex items-center gap-[4.400px]">
            {markerShapes.map((d, i) => <MarkerButton key={i} d={d} />)}
            <div className="ml-[3px] h-[32px] w-px bg-[#a9a9a9]" />
            <MarkerButton d="M2 2h12v12H2z" className="ml-[4px]" />
            <MarkerButton d="M8 1.500a6.500 6.500 0 1 0 .01 0" />
          </div>
        </fieldset>
        <fieldset className="mt-[9px] h-[158px] w-[286px] border border-[#dcdcdc]">
          <legend className="-ml-px pr-[4px]"><Radio label="Use AutoCAD BLOCK symbol for marker" w={178} on /></legend>
          <BlockList />
        </fieldset>
        <Fit w={101} className="mt-[14px] -ml-px h-[17px] leading-[16px]">Marker rotation angle:</Fit>
        <div className="-ml-px flex items-center">
          <div className="flex h-[19px] w-[96px] items-center border border-[#6f7378] bg-white pl-[4px]"><Fit w={33}>000 (d)</Fit></div>
          <div className="relative ml-[6px] flex h-[20px] w-[21px] items-center justify-center border border-[#c4c4c4] bg-[#e1e1e1]">
            <Icon size={13} d="M6 3v10l2-2 2 4 1.500-1-1.500-3.500h3z" className="mt-[2px]" />
            <div className="absolute top-px left-[5px] h-[3px] w-[3px] bg-[#3fa34a]" />
          </div>
        </div>
      </div>
      <div className="w-[300px] pt-[8px] pl-[12px]">
        <fieldset className="h-[141px] w-[286px] border border-[#dcdcdc]">
          <legend className="ml-[4px] px-[2px]"><Fit w={18} className="h-[14px] leading-[14px]">Size</Fit></legend>
          <div className="mt-px ml-[10px] flex h-[16px] items-center">
            <Fit w={38}>Options:</Fit>
            <Fit w={15} className="ml-[135px]">mm</Fit>
          </div>
          <div className="ml-[10px] flex">
            <div className="flex h-[20px] w-[168px] items-center justify-between border border-[#adadad] bg-[#e1e1e1] pr-[2px] pl-[2px]"><Fit w={81}>Use drawing scale</Fit><ChevronDown size={12} strokeWidth={1.500} /></div>
            <div className="ml-[6px] flex h-[19px] w-[90px] items-center border border-[#6f7378] bg-white pl-[5px]"><Fit w={35}>2.00mm</Fit></div>
          </div>
          <fieldset className="mt-[10px] ml-[10px] h-[67px] w-[264px] border border-[#dcdcdc] text-[#8d8d8d]">
            <legend className="ml-[4px] px-[2px] text-[#2c2c2c]"><Fit w={51} className="h-[14px] leading-[14px]">Fixed Scale</Fit></legend>
            <div className="mt-[6px] ml-[10px] flex gap-[3px]">
              {['X:', 'Y:', 'Z:'].map((axis) => (
                <div key={axis} className="w-[79px]">
                  <Fit w={9} className="h-[17px] leading-[16px] text-[#a5a5a5]">{axis}</Fit>
                  <div className="flex h-[19px] items-center border border-[#cccccc] pl-[5px]">1</div>
                </div>
              ))}
            </div>
          </fieldset>
        </fieldset>
        <fieldset className="mt-[11px] h-[134px] w-[286px] border border-[#dcdcdc]">
          <legend className="ml-[4px] px-[2px]"><Fit w={36} className="h-[14px] leading-[14px]">Preview</Fit></legend>
          <div className="relative mt-[6px] ml-[11px] h-[102px] w-[262px] border border-[#777] bg-[#222930] pl-[79px] font-['Liberation_Sans',sans-serif] text-[28.500px] text-[#f2f52b] [-webkit-text-stroke:0.900px_#f2f52b]">
            <Fit w={14} className="-mt-[5px] -ml-[2px] h-[35px] leading-[36px]">1</Fit>
            <Fit w={70} className="h-[35px] leading-[36px]">0.000</Fit>
            <Fit w={137} className="-ml-px h-[35px] leading-[36px]">Description</Fit>
            <div className="absolute top-[8px] right-[8px] h-[15px] w-[15px] border border-[#888c90] bg-[#9a9ea2]" />
            <svg width="20" height="20" viewBox="0 0 20 20" fill="none" className="absolute top-[40px] left-[56px]">
              <path d="M1 7l12 13V7" stroke="#e4e6e8" />
              <path d="M13 2l4.500 4.500L13 11 8.500 6.500z" fill="#f5f52b" />
            </svg>
          </div>
        </fieldset>
        <Fit w={104} className="mt-[9px] -ml-px h-[18px] leading-[18px]">Orientation Reference:</Fit>
        <div className="mt-[5px] flex h-[20px] w-[185px] items-center justify-between border border-[#adadad] bg-[#e1e1e1] pr-[2px] pl-[2px]"><Fit w={115}>World Coordinate System</Fit><ChevronDown size={12} strokeWidth={1.500} /></div>
      </div>
    </div>
    <div className="relative flex flex-1 items-start justify-end gap-[7px] pt-[12px] pr-[7px]">
      {dialogButtons.map(([label, w], i) => (
        <div key={label} className={clsx('flex h-[19px] w-[71.500px] items-center justify-center bg-[#e1e1e1]', i === 0 ? 'border-2 border-[#2f6fb5]' : 'border border-[#adadad]')}>
          <Fit w={w}>{label}</Fit>
        </div>
      ))}
      <Icon size={11} d="M0 16L16 0M5 16L16 5M10 16l6-6" className="absolute right-0 bottom-0 text-[#777]" />
    </div>
  </section>
);

const App: React.FC = () => (
  <div className="relative flex h-[720px] w-[1280px] flex-col overflow-hidden bg-[#232a33] font-['Noto_Sans',sans-serif]">
    <header className="flex h-[42px] shrink-0">
      <div className="relative z-10 flex h-[38px] w-[38px] shrink-0 flex-col items-center border border-[#d0d2d4] bg-linear-to-b from-[#b7babd] to-[#7f8386] text-[#1d2126]">
        <CLogo size={25} />
        <span className="text-[7px] leading-[9px] font-bold">C3D</span>
        <Caret className="absolute top-[16px] right-0" />
      </div>
      <div className="flex-1">
        <TitleBar />
        <MenuRow />
      </div>
    </header>
    <Ribbon />
    <FileTabs />
    <main className="flex h-[503px] shrink-0 bg-[#3b4453]">
      <Toolspace />
      <SideTabs />
      <div className="w-[929px] shrink-0">
        <Drawing />
        <CommandLine />
      </div>
      <div className="mt-[4px] ml-[3px] flex flex-1 justify-start rounded-tl border-l border-[#2a313c] bg-[#3b4453] pt-[4px] pl-[5px]">
        <div className="h-[3px] w-[9px] border-y border-dotted border-[#b3b9c1]" />
      </div>
    </main>
    <StatusBar />
    <Taskbar />
    <Panorama />
    <PointStyleDialog />
  </div>
);

export default App;
